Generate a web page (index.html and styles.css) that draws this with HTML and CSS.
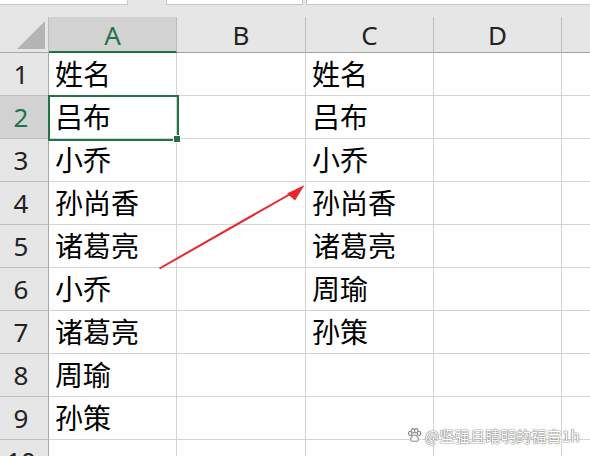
FILE: index.html
```html
<!DOCTYPE html>
<html lang="zh">
<head>
<meta charset="utf-8">
<link rel="stylesheet" href="styles.css">
</head>
<body>
<div class="app">
  <div class="topbar">
    <div class="tb tb1"></div>
    <div class="tb tb2"></div>
    <div class="tb tb3"></div>
  </div>
  <div class="sheet">
    <div class="grid">
      <div class="corner"><span class="tri"></span></div>
      <div class="ch sel">A</div>
      <div class="ch">B</div>
      <div class="ch">C</div>
      <div class="ch">D</div>
      <div class="ch last"></div>

      <div class="rh">1</div><div class="c">姓名</div><div class="c"></div><div class="c">姓名</div><div class="c"></div><div class="c last"></div>
      <div class="rh sel">2</div><div class="c">吕布</div><div class="c"></div><div class="c">吕布</div><div class="c"></div><div class="c last"></div>
      <div class="rh">3</div><div class="c">小乔</div><div class="c"></div><div class="c">小乔</div><div class="c"></div><div class="c last"></div>
      <div class="rh">4</div><div class="c">孙尚香</div><div class="c"></div><div class="c">孙尚香</div><div class="c"></div><div class="c last"></div>
      <div class="rh">5</div><div class="c">诸葛亮</div><div class="c"></div><div class="c">诸葛亮</div><div class="c"></div><div class="c last"></div>
      <div class="rh">6</div><div class="c">小乔</div><div class="c"></div><div class="c">周瑜</div><div class="c"></div><div class="c last"></div>
      <div class="rh">7</div><div class="c">诸葛亮</div><div class="c"></div><div class="c">孙策</div><div class="c"></div><div class="c last"></div>
      <div class="rh">8</div><div class="c">周瑜</div><div class="c"></div><div class="c"></div><div class="c"></div><div class="c last"></div>
      <div class="rh">9</div><div class="c">孙策</div><div class="c"></div><div class="c"></div><div class="c"></div><div class="c last"></div>
      <div class="rh">10</div><div class="c"></div><div class="c"></div><div class="c"></div><div class="c"></div><div class="c last"></div>
    </div>
    <div class="selbox"><span class="handle"></span></div>
    <svg class="arrow" width="590" height="456" viewBox="0 0 590 456">
      <line x1="159.5" y1="268.5" x2="292" y2="193" stroke="#e8262b" stroke-width="2"/>
      <polygon points="304.5,185 287,193.5 295,200.5" fill="#e8262b"/>
    </svg>
    <div class="wm">
      <svg class="paw" width="15" height="15" viewBox="0 0 14 14">
        <g fill="#ffffff" stroke="#8a8a8a" stroke-width="1">
          <ellipse cx="3" cy="5" rx="1.6" ry="2"/>
          <ellipse cx="5.6" cy="2.6" rx="1.6" ry="2"/>
          <ellipse cx="8.6" cy="2.6" rx="1.6" ry="2"/>
          <ellipse cx="11.2" cy="5" rx="1.6" ry="2"/>
          <path d="M7 6.5 C4.5 6.5 3 9.5 3.5 11.5 C4 13 6 12.2 7 12.2 C8 12.2 10 13 10.5 11.5 C11 9.5 9.5 6.5 7 6.5 Z"/>
        </g>
      </svg>
      <span>@坚强且睛明的福音1h</span>
    </div>
  </div>
</div>
</body>
</html>
```

FILE: styles.css
```css
html, body {
  margin: 0;
  padding: 0;
  width: 590px;
  height: 456px;
  overflow: hidden;
  background: #e6e6e6;
}
.app {
  width: 590px;
  height: 456px;
  position: relative;
  overflow: hidden;
  font-family: "Noto Sans", "Noto Sans CJK SC", sans-serif;
}
.topbar {
  height: 17px;
  display: flex;
  background: #e6e6e6;
  position: relative;
}
.tb {
  background: #ffffff;
  border: 1px solid #c6c6c6;
  border-top: none;
  box-sizing: border-box;
  height: 5px;
}
.tb1 { width: 129px; margin-left: -1px; }
.tb2 { width: 137px; margin-left: 38px; }
.tb3 { flex: 1; margin-left: 3px; margin-right: -2px; }
.sheet {
  position: relative;
}
.grid {
  display: grid;
  grid-template-columns: 49px 128px 129px 128px 128px 40px;
  grid-template-rows: 36px repeat(10, 43px);
  background: #ffffff;
}
.corner {
  background: #e6e6e6;
  border-bottom: 1px solid #a8a8a8;
  border-right: 1px solid #bdbdbd;
  box-sizing: border-box;
  position: relative;
}
.tri {
  position: absolute;
  left: 17px;
  top: 4px;
  width: 0;
  height: 0;
  border-left: 28px solid transparent;
  border-bottom: 28px solid #b4b4b4;
}
.ch {
  background: #e6e6e6;
  border-right: 1px solid #bdbdbd;
  border-bottom: 1px solid #a0a0a0;
  box-sizing: border-box;
  display: flex;
  align-items: center;
  justify-content: center;
  font-size: 26px;
  color: #222222;
  padding-top: 1px;
}
.ch.sel {
  background: #d2d2d2;
  color: #217346;
  border-bottom: 2px solid #217346;
  padding-top: 2px;
}
.ch.last { border-right: none; }
.rh {
  background: #e6e6e6;
  border-right: 1px solid #a8a8a8;
  border-bottom: 1px solid #bdbdbd;
  box-sizing: border-box;
  display: flex;
  align-items: center;
  justify-content: center;
  padding-right: 6px;
  font-size: 26px;
  color: #222222;
}
.rh.sel {
  background: #d2d2d2;
  color: #217346;
}
.c {
  border-right: 1px solid #d4d4d4;
  border-bottom: 1px solid #d4d4d4;
  box-sizing: border-box;
  display: flex;
  align-items: center;
  padding-left: 6px;
  padding-bottom: 3px;
  font-family: "Noto Sans CJK SC", sans-serif;
  font-size: 28px;
  color: #000000;
  white-space: nowrap;
}
.c.last { border-right: none; }
.selbox {
  position: absolute;
  left: 48px;
  top: 78px;
  width: 131px;
  height: 46px;
  border: 2px solid #217346;
  box-sizing: border-box;
}
.handle {
  position: absolute;
  right: -4px;
  bottom: -4px;
  width: 6px;
  height: 6px;
  background: #217346;
  border: 1px solid #ffffff;
}
.arrow {
  position: absolute;
  left: 0;
  top: -17px;
}
.wm {
  position: absolute;
  left: 407px;
  top: 408px;
  display: flex;
  align-items: center;
  gap: 3px;
  font-family: "Noto Sans CJK SC", sans-serif;
  font-size: 15px;
  letter-spacing: 0.3px;
  color: #ffffff;
  text-shadow: 0 0 1px #777, 0 0 1px #777, 0 0 2px #999;
  white-space: nowrap;
}
.paw {
  display: block;
}
```
